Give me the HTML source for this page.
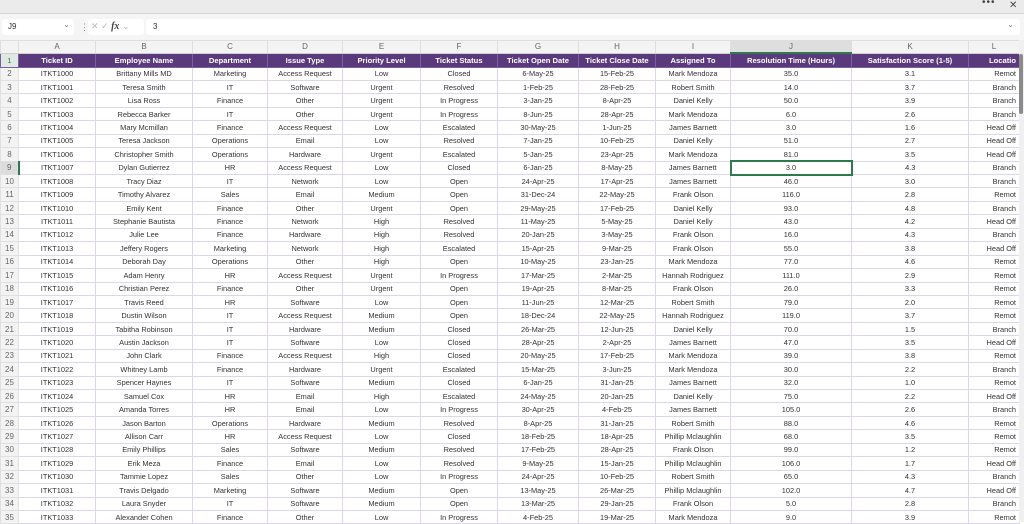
<!DOCTYPE html>
<html><head><meta charset="utf-8"><style>
*{box-sizing:border-box;margin:0;padding:0}
body{width:1024px;height:522px;overflow:hidden;background:#fff;font-family:"Liberation Sans",sans-serif;position:relative}
.top{position:absolute;left:0;top:0;width:1024px;height:14px;background:#ebebeb;border-bottom:1px solid #d6d6d6}
.top .dots{position:absolute;left:982px;top:-3px;font-size:10px;color:#444;letter-spacing:1px}
.top .x{position:absolute;left:1009px;top:0px;font-size:10px;color:#444}
.fbar{position:absolute;left:0;top:14px;width:1024px;height:26px;background:#f5f5f5}
.nb{position:absolute;left:2px;top:5px;width:72px;height:16px;background:#fff;border-radius:3px;font-size:8px;color:#333;padding:3px 0 0 6px}
.nb span{position:absolute;right:4px;top:1px;color:#777;font-size:8px}
.ic{position:absolute;left:88px;top:5px;width:56px;height:16px;background:#fff;border-radius:3px;font-size:9px;color:#bbb;padding:2px 0 0 3px}
.ic i{font-family:"Liberation Serif",serif;color:#444;font-size:10px;font-weight:bold}
.fx{position:absolute;left:146px;top:5px;width:874px;height:16px;background:#fff;border-radius:3px;font-size:8px;color:#333;padding:3px 0 0 7px}
.fx span{position:absolute;right:6px;top:1px;color:#777}
.vsep{position:absolute;left:80px;top:8px;font-size:9px;color:#888}
table{position:absolute;left:0;top:40px;border-collapse:collapse;table-layout:fixed;width:1019px;font-size:7.4px;color:#333}
td{border:1px solid #dcd5ec;text-align:center;white-space:nowrap;overflow:hidden;height:13.45px;padding:0 2px;line-height:11px}
tr.cl td{height:12px;background:#f3f3f3;color:#666;border-color:#dedede;font-size:8px;border-bottom:1px solid #cfcfcf}
tr.cl td.sj{background:#dedede;border-bottom:2px solid #2f7a4d}
tr.h td{height:14px;background:#5a3a7d;color:#fff;font-weight:bold;font-size:7.6px;border-color:#7c5fa0}
td.n{background:#f3f3f3;color:#666;border-color:#e0e0e0;text-align:center;font-size:8px;padding:0}
td.ns{background:#dcdcdc;border-right:2px solid #2f7a4d}
td.r{text-align:right;padding-right:3px}
td.sel{border:2px solid #2f7a4d}
tr.h td.n{background:#dfe9e2;color:#2f7a4d;font-weight:normal}
.sb{position:absolute;left:1019px;top:40px;width:5px;height:482px;background:#f0f0f0}
.sb div{position:absolute;left:0;top:14px;width:4px;height:60px;background:#8a8a8a;border-radius:2px}
</style></head><body>
<div class="top"><span class="dots">•••</span><span class="x">✕</span></div>
<div class="fbar">
<div class="nb">J9<span>⌄</span></div>
<span class="vsep">⋮</span>
<div class="ic">✕ ✓ <i>fx</i> ⌄</div>
<div class="fx">3<span>⌄</span></div>
</div>
<table>
<colgroup><col style="width:18px"><col style="width:77px"><col style="width:97px"><col style="width:75px"><col style="width:75px"><col style="width:78px"><col style="width:77px"><col style="width:81px"><col style="width:77px"><col style="width:75px"><col style="width:121px"><col style="width:117px"><col style="width:51px"></colgroup>
<tr class="cl"><td></td><td>A</td><td>B</td><td>C</td><td>D</td><td>E</td><td>F</td><td>G</td><td>H</td><td>I</td><td class="sj">J</td><td>K</td><td>L</td></tr>
<tr class="h"><td class="n">1</td><td>Ticket ID</td><td>Employee Name</td><td>Department</td><td>Issue Type</td><td>Priority Level</td><td>Ticket Status</td><td>Ticket Open Date</td><td>Ticket Close Date</td><td>Assigned To</td><td>Resolution Time (Hours)</td><td>Satisfaction Score (1-5)</td><td class="r">Locatio</td></tr>
<tr><td class="n">2</td><td>ITKT1000</td><td>Brittany Mills MD</td><td>Marketing</td><td>Access Request</td><td>Low</td><td>Closed</td><td>6-May-25</td><td>15-Feb-25</td><td>Mark Mendoza</td><td>35.0</td><td>3.1</td><td class="r">Remot</td></tr>
<tr><td class="n">3</td><td>ITKT1001</td><td>Teresa Smith</td><td>IT</td><td>Software</td><td>Urgent</td><td>Resolved</td><td>1-Feb-25</td><td>28-Feb-25</td><td>Robert Smith</td><td>14.0</td><td>3.7</td><td class="r">Branch</td></tr>
<tr><td class="n">4</td><td>ITKT1002</td><td>Lisa Ross</td><td>Finance</td><td>Other</td><td>Urgent</td><td>In Progress</td><td>3-Jan-25</td><td>8-Apr-25</td><td>Daniel Kelly</td><td>50.0</td><td>3.9</td><td class="r">Branch</td></tr>
<tr><td class="n">5</td><td>ITKT1003</td><td>Rebecca Barker</td><td>IT</td><td>Other</td><td>Urgent</td><td>In Progress</td><td>8-Jun-25</td><td>28-Apr-25</td><td>Mark Mendoza</td><td>6.0</td><td>2.6</td><td class="r">Branch</td></tr>
<tr><td class="n">6</td><td>ITKT1004</td><td>Mary Mcmillan</td><td>Finance</td><td>Access Request</td><td>Low</td><td>Escalated</td><td>30-May-25</td><td>1-Jun-25</td><td>James Barnett</td><td>3.0</td><td>1.6</td><td class="r">Head Off</td></tr>
<tr><td class="n">7</td><td>ITKT1005</td><td>Teresa Jackson</td><td>Operations</td><td>Email</td><td>Low</td><td>Resolved</td><td>7-Jan-25</td><td>10-Feb-25</td><td>Daniel Kelly</td><td>51.0</td><td>2.7</td><td class="r">Head Off</td></tr>
<tr><td class="n">8</td><td>ITKT1006</td><td>Christopher Smith</td><td>Operations</td><td>Hardware</td><td>Urgent</td><td>Escalated</td><td>5-Jan-25</td><td>23-Apr-25</td><td>Mark Mendoza</td><td>81.0</td><td>3.5</td><td class="r">Head Off</td></tr>
<tr><td class="n ns">9</td><td>ITKT1007</td><td>Dylan Gutierrez</td><td>HR</td><td>Access Request</td><td>Low</td><td>Closed</td><td>6-Jan-25</td><td>8-May-25</td><td>James Barnett</td><td class="sel">3.0</td><td>4.3</td><td class="r">Branch</td></tr>
<tr><td class="n">10</td><td>ITKT1008</td><td>Tracy Diaz</td><td>IT</td><td>Network</td><td>Low</td><td>Open</td><td>24-Apr-25</td><td>17-Apr-25</td><td>James Barnett</td><td>46.0</td><td>3.0</td><td class="r">Branch</td></tr>
<tr><td class="n">11</td><td>ITKT1009</td><td>Timothy Alvarez</td><td>Sales</td><td>Email</td><td>Medium</td><td>Open</td><td>31-Dec-24</td><td>22-May-25</td><td>Frank Olson</td><td>116.0</td><td>2.8</td><td class="r">Remot</td></tr>
<tr><td class="n">12</td><td>ITKT1010</td><td>Emily Kent</td><td>Finance</td><td>Other</td><td>Urgent</td><td>Open</td><td>29-May-25</td><td>17-Feb-25</td><td>Daniel Kelly</td><td>93.0</td><td>4.8</td><td class="r">Branch</td></tr>
<tr><td class="n">13</td><td>ITKT1011</td><td>Stephanie Bautista</td><td>Finance</td><td>Network</td><td>High</td><td>Resolved</td><td>11-May-25</td><td>5-May-25</td><td>Daniel Kelly</td><td>43.0</td><td>4.2</td><td class="r">Head Off</td></tr>
<tr><td class="n">14</td><td>ITKT1012</td><td>Julie Lee</td><td>Finance</td><td>Hardware</td><td>High</td><td>Resolved</td><td>20-Jan-25</td><td>3-May-25</td><td>Frank Olson</td><td>16.0</td><td>4.3</td><td class="r">Branch</td></tr>
<tr><td class="n">15</td><td>ITKT1013</td><td>Jeffery Rogers</td><td>Marketing</td><td>Network</td><td>High</td><td>Escalated</td><td>15-Apr-25</td><td>9-Mar-25</td><td>Frank Olson</td><td>55.0</td><td>3.8</td><td class="r">Head Off</td></tr>
<tr><td class="n">16</td><td>ITKT1014</td><td>Deborah Day</td><td>Operations</td><td>Other</td><td>High</td><td>Open</td><td>10-May-25</td><td>23-Jan-25</td><td>Mark Mendoza</td><td>77.0</td><td>4.6</td><td class="r">Remot</td></tr>
<tr><td class="n">17</td><td>ITKT1015</td><td>Adam Henry</td><td>HR</td><td>Access Request</td><td>Urgent</td><td>In Progress</td><td>17-Mar-25</td><td>2-Mar-25</td><td>Hannah Rodriguez</td><td>111.0</td><td>2.9</td><td class="r">Remot</td></tr>
<tr><td class="n">18</td><td>ITKT1016</td><td>Christian Perez</td><td>Finance</td><td>Other</td><td>Urgent</td><td>Open</td><td>19-Apr-25</td><td>8-Mar-25</td><td>Frank Olson</td><td>26.0</td><td>3.3</td><td class="r">Remot</td></tr>
<tr><td class="n">19</td><td>ITKT1017</td><td>Travis Reed</td><td>HR</td><td>Software</td><td>Low</td><td>Open</td><td>11-Jun-25</td><td>12-Mar-25</td><td>Robert Smith</td><td>79.0</td><td>2.0</td><td class="r">Remot</td></tr>
<tr><td class="n">20</td><td>ITKT1018</td><td>Dustin Wilson</td><td>IT</td><td>Access Request</td><td>Medium</td><td>Open</td><td>18-Dec-24</td><td>22-May-25</td><td>Hannah Rodriguez</td><td>119.0</td><td>3.7</td><td class="r">Remot</td></tr>
<tr><td class="n">21</td><td>ITKT1019</td><td>Tabitha Robinson</td><td>IT</td><td>Hardware</td><td>Medium</td><td>Closed</td><td>26-Mar-25</td><td>12-Jun-25</td><td>Daniel Kelly</td><td>70.0</td><td>1.5</td><td class="r">Branch</td></tr>
<tr><td class="n">22</td><td>ITKT1020</td><td>Austin Jackson</td><td>IT</td><td>Software</td><td>Low</td><td>Closed</td><td>28-Apr-25</td><td>2-Apr-25</td><td>James Barnett</td><td>47.0</td><td>3.5</td><td class="r">Head Off</td></tr>
<tr><td class="n">23</td><td>ITKT1021</td><td>John Clark</td><td>Finance</td><td>Access Request</td><td>High</td><td>Closed</td><td>20-May-25</td><td>17-Feb-25</td><td>Mark Mendoza</td><td>39.0</td><td>3.8</td><td class="r">Remot</td></tr>
<tr><td class="n">24</td><td>ITKT1022</td><td>Whitney Lamb</td><td>Finance</td><td>Hardware</td><td>Urgent</td><td>Escalated</td><td>15-Mar-25</td><td>3-Jun-25</td><td>Mark Mendoza</td><td>30.0</td><td>2.2</td><td class="r">Branch</td></tr>
<tr><td class="n">25</td><td>ITKT1023</td><td>Spencer Haynes</td><td>IT</td><td>Software</td><td>Medium</td><td>Closed</td><td>6-Jan-25</td><td>31-Jan-25</td><td>James Barnett</td><td>32.0</td><td>1.0</td><td class="r">Remot</td></tr>
<tr><td class="n">26</td><td>ITKT1024</td><td>Samuel Cox</td><td>HR</td><td>Email</td><td>High</td><td>Escalated</td><td>24-May-25</td><td>20-Jan-25</td><td>Daniel Kelly</td><td>75.0</td><td>2.2</td><td class="r">Head Off</td></tr>
<tr><td class="n">27</td><td>ITKT1025</td><td>Amanda Torres</td><td>HR</td><td>Email</td><td>Low</td><td>In Progress</td><td>30-Apr-25</td><td>4-Feb-25</td><td>James Barnett</td><td>105.0</td><td>2.6</td><td class="r">Branch</td></tr>
<tr><td class="n">28</td><td>ITKT1026</td><td>Jason Barton</td><td>Operations</td><td>Hardware</td><td>Medium</td><td>Resolved</td><td>8-Apr-25</td><td>31-Jan-25</td><td>Robert Smith</td><td>88.0</td><td>4.6</td><td class="r">Remot</td></tr>
<tr><td class="n">29</td><td>ITKT1027</td><td>Allison Carr</td><td>HR</td><td>Access Request</td><td>Low</td><td>Closed</td><td>18-Feb-25</td><td>18-Apr-25</td><td>Phillip Mclaughlin</td><td>68.0</td><td>3.5</td><td class="r">Remot</td></tr>
<tr><td class="n">30</td><td>ITKT1028</td><td>Emily Phillips</td><td>Sales</td><td>Software</td><td>Medium</td><td>Resolved</td><td>17-Feb-25</td><td>28-Apr-25</td><td>Frank Olson</td><td>99.0</td><td>1.2</td><td class="r">Remot</td></tr>
<tr><td class="n">31</td><td>ITKT1029</td><td>Erik Meza</td><td>Finance</td><td>Email</td><td>Low</td><td>Resolved</td><td>9-May-25</td><td>15-Jan-25</td><td>Phillip Mclaughlin</td><td>106.0</td><td>1.7</td><td class="r">Head Off</td></tr>
<tr><td class="n">32</td><td>ITKT1030</td><td>Tammie Lopez</td><td>Sales</td><td>Other</td><td>Low</td><td>In Progress</td><td>24-Apr-25</td><td>10-Feb-25</td><td>Robert Smith</td><td>65.0</td><td>4.3</td><td class="r">Branch</td></tr>
<tr><td class="n">33</td><td>ITKT1031</td><td>Travis Delgado</td><td>Marketing</td><td>Software</td><td>Medium</td><td>Open</td><td>13-May-25</td><td>26-Mar-25</td><td>Phillip Mclaughlin</td><td>102.0</td><td>4.7</td><td class="r">Head Off</td></tr>
<tr><td class="n">34</td><td>ITKT1032</td><td>Laura Snyder</td><td>IT</td><td>Software</td><td>Medium</td><td>Open</td><td>13-Mar-25</td><td>29-Jan-25</td><td>Frank Olson</td><td>5.0</td><td>2.8</td><td class="r">Branch</td></tr>
<tr><td class="n">35</td><td>ITKT1033</td><td>Alexander Cohen</td><td>Finance</td><td>Other</td><td>Low</td><td>In Progress</td><td>4-Feb-25</td><td>19-Mar-25</td><td>Mark Mendoza</td><td>9.0</td><td>3.9</td><td class="r">Remot</td></tr>
</table>
<div class="sb"><div></div></div>
</body></html>
